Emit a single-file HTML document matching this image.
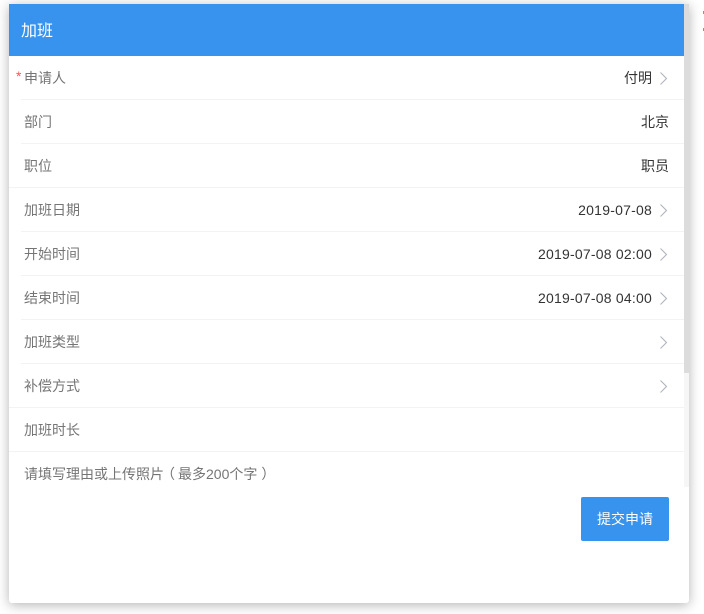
<!DOCTYPE html>
<html lang="zh">
<head>
<meta charset="utf-8">
<style>
html,body{margin:0;padding:0;width:704px;height:614px;overflow:hidden;background:#fff;font-family:"Liberation Sans","Noto Sans CJK SC",sans-serif;}
.card{position:absolute;left:9px;top:4px;width:680px;height:599px;background:#fff;border-radius:0 0 3px 3px;box-shadow:0 2px 12px rgba(0,0,0,.3);overflow:hidden;}
.head{position:absolute;left:0;top:0;width:675px;height:52px;background:#3793ed;color:#fff;font-size:16px;line-height:56px;padding-left:12px;box-sizing:border-box;}
.track{position:absolute;left:675px;top:0;width:5px;height:483px;background:#f6f6f6;}
.thumb{position:absolute;left:675px;top:0;width:5px;height:369px;background:#dcdcdc;}
.row{position:absolute;left:0;width:675px;height:44px;line-height:45px;font-size:14px;color:#757575;}
.row .b{position:absolute;left:12px;right:0;bottom:0;height:1px;background:#f3f3f3;}
.row .b.full{left:0;}
.row .l{position:absolute;left:15px;top:0;}
.row .r{position:absolute;right:32px;top:0;color:#333;white-space:nowrap;letter-spacing:.22px;}
.row .r.n{right:15px;letter-spacing:0;}
.row .r.cn{letter-spacing:0;}
.row svg{position:absolute;left:650px;top:14px;}
.star{position:absolute;left:7px;top:-2px;color:#f0555a;font-size:14px;}
.ph{position:absolute;left:15px;top:461px;font-size:14px;line-height:18px;color:#757575;white-space:nowrap;}
.ph span{position:relative;}
.btn{position:absolute;left:572px;top:493px;width:88px;height:44px;background:#3793ed;border-radius:2px;color:#fff;font-size:14px;line-height:44px;text-align:center;}
.edge{position:absolute;left:703px;top:0;width:1px;height:32px;}
.edge i{position:absolute;left:0;width:1px;height:3px;background:#a98d6c;}
</style>
</head>
<body>
<div class="card">
  <div class="head">加班</div>
  <div class="track"></div>
  <div class="thumb"></div>

  <div class="row" style="top:52px"><span class="star">*</span><span class="l">申请人</span><span class="r cn">付明</span><svg width="10" height="16" viewBox="0 0 10 16"><path d="M1.5 2.5 L7.5 8.5 L1.5 14.5" fill="none" stroke="#b0b4c0" stroke-width="1.1"/></svg><div class="b"></div></div>
  <div class="row" style="top:96px"><span class="l">部门</span><span class="r n">北京</span><div class="b"></div></div>
  <div class="row" style="top:140px"><span class="l">职位</span><span class="r n">职员</span><div class="b full"></div></div>
  <div class="row" style="top:184px"><span class="l">加班日期</span><span class="r">2019-07-08</span><svg width="10" height="16" viewBox="0 0 10 16"><path d="M1.5 2.5 L7.5 8.5 L1.5 14.5" fill="none" stroke="#b0b4c0" stroke-width="1.1"/></svg><div class="b"></div></div>
  <div class="row" style="top:228px"><span class="l">开始时间</span><span class="r">2019-07-08 02:00</span><svg width="10" height="16" viewBox="0 0 10 16"><path d="M1.5 2.5 L7.5 8.5 L1.5 14.5" fill="none" stroke="#b0b4c0" stroke-width="1.1"/></svg><div class="b"></div></div>
  <div class="row" style="top:272px"><span class="l">结束时间</span><span class="r">2019-07-08 04:00</span><svg width="10" height="16" viewBox="0 0 10 16"><path d="M1.5 2.5 L7.5 8.5 L1.5 14.5" fill="none" stroke="#b0b4c0" stroke-width="1.1"/></svg><div class="b"></div></div>
  <div class="row" style="top:316px"><span class="l">加班类型</span><svg width="10" height="16" viewBox="0 0 10 16"><path d="M1.5 2.5 L7.5 8.5 L1.5 14.5" fill="none" stroke="#b0b4c0" stroke-width="1.1"/></svg><div class="b"></div></div>
  <div class="row" style="top:360px"><span class="l">补偿方式</span><svg width="10" height="16" viewBox="0 0 10 16"><path d="M1.5 2.5 L7.5 8.5 L1.5 14.5" fill="none" stroke="#b0b4c0" stroke-width="1.1"/></svg><div class="b full"></div></div>
  <div class="row" style="top:404px"><span class="l">加班时长</span><div class="b full"></div></div>

  <div class="ph">请填写理由或上传照片<span style="left:-3px">（</span>最多200个字<span style="left:4px">）</span></div>
  <div class="btn">提交申请</div>
</div>
<div class="edge"><i style="top:11px"></i><i style="top:28px"></i></div>
</body>
</html>
